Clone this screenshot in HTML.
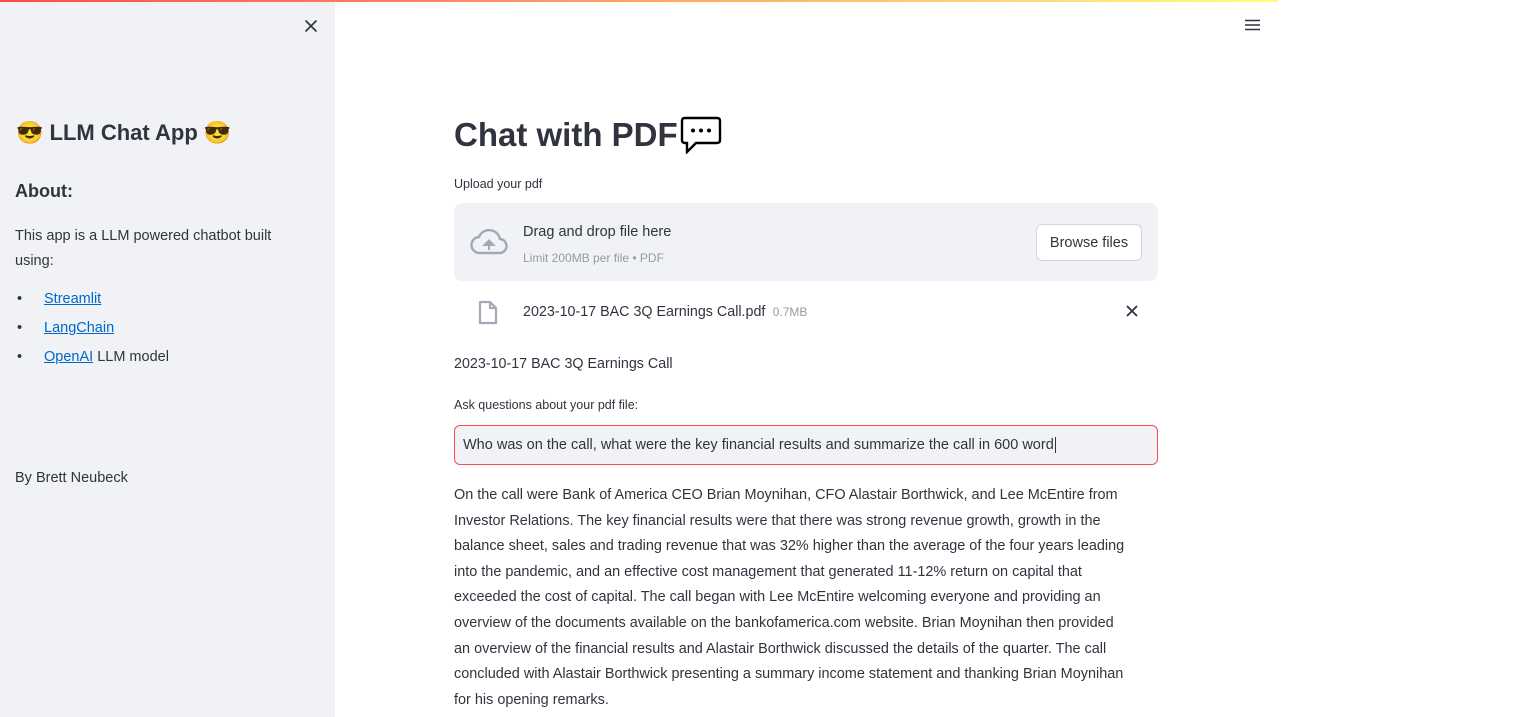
<!DOCTYPE html>
<html><head><meta charset="utf-8"><style>
*{margin:0;padding:0;box-sizing:border-box}
body{width:1536px;height:717px;overflow:hidden;background:#fff;font-family:"Liberation Sans",sans-serif;color:#31333f;position:relative}
.a{position:absolute;white-space:nowrap}
#bar{position:absolute;left:0;top:0;width:1278px;height:2px;background:linear-gradient(90deg,#ff4b4b,#fffd80)}
#side{position:absolute;left:0;top:2px;width:335px;height:715px;background:#f0f2f6}
a{color:#0068c9}
.p{font-size:14.5px}
.body{font-size:14.45px;line-height:25.6px}
</style></head><body>
<div id="bar"></div>
<div id="side"></div>
<svg class="a" style="left:304px;top:19px" width="14" height="14" viewBox="0 0 14 14"><path d="M1.5 1.5L12.5 12.5M12.5 1.5L1.5 12.5" stroke="#31333f" stroke-width="1.6"/></svg>
<div class="a" style="left:16px;top:118px;font-size:22px;font-weight:bold;line-height:30px">😎 LLM Chat App 😎</div>
<div class="a" style="left:15px;top:181px;font-size:18px;font-weight:bold">About:</div>
<div class="a p" style="left:15px;top:224px;line-height:25px">This app is a LLM powered chatbot built<br>using:</div>
<div class="a p" style="left:17px;top:291px">•</div><div class="a p" style="left:44px;top:291px"><a href="#">Streamlit</a></div>
<div class="a p" style="left:17px;top:320px">•</div><div class="a p" style="left:44px;top:320px"><a href="#">LangChain</a></div>
<div class="a p" style="left:17px;top:349px">•</div><div class="a p" style="left:44px;top:349px"><a href="#">OpenAI</a> LLM model</div>
<div class="a p" style="left:15px;top:470px">By Brett Neubeck</div>
<svg class="a" style="left:1244px;top:19px" width="17" height="12" viewBox="0 0 17 12"><path d="M1 1.5H16M1 6H16M1 10.5H16" stroke="#31333f" stroke-width="1.6"/></svg>
<div class="a" style="left:454px;top:114px;font-size:33px;font-weight:bold;line-height:42px">Chat with PDF</div>
<svg class="a" style="left:680px;top:116px" width="42" height="38" viewBox="0 0 42 38"><path d="M5 2H37Q40 2 40 5V24Q40 27 37 27H16L7 36V27H5Q2 27 2 24V5Q2 2 5 2Z" fill="#fff" stroke="#000" stroke-width="2.4"/><circle cx="13" cy="14.5" r="2" fill="#000"/><circle cx="21" cy="14.5" r="2" fill="#000"/><circle cx="29" cy="14.5" r="2" fill="#000"/></svg>
<div class="a" style="left:454px;top:177px;font-size:12.5px">Upload your pdf</div>
<div class="a" style="left:454px;top:203px;width:704px;height:78px;background:#f0f2f6;border-radius:8px"></div>
<svg class="a" style="left:470px;top:228px" width="38" height="28" viewBox="0 0 38 28"><path d="M10 25H29A7 7 0 0 0 30 11A11 11 0 0 0 9 9A8 8 0 0 0 10 25Z" fill="none" stroke="#a3a8b8" stroke-width="2.4"/><path d="M19 22V13M14.5 17L19 12.5L23.5 17Z" fill="#a3a8b8" stroke="#a3a8b8" stroke-width="2"/></svg>
<div class="a" style="left:523px;top:224px;font-size:14.5px">Drag and drop file here</div>
<div class="a" style="left:523px;top:251px;font-size:12px;color:#979aa4">Limit 200MB per file • PDF</div>
<div class="a" style="left:1036px;top:224px;width:106px;height:37px;background:#fff;border:1px solid #d6d6d9;border-radius:6px;font-size:14.5px;text-align:center;line-height:36px">Browse files</div>
<svg class="a" style="left:478px;top:300px" width="20" height="25" viewBox="0 0 20 25"><path d="M2 2H12L18 8V23H2Z M12 2V8H18" fill="none" stroke="#a3a8b8" stroke-width="2.2" stroke-linejoin="round"/></svg>
<div class="a" style="left:523px;top:304px;font-size:14.3px">2023-10-17 BAC 3Q Earnings Call.pdf <span style="font-size:12px;color:#979aa4">&nbsp;0.7MB</span></div>
<svg class="a" style="left:1126px;top:305px" width="12" height="12" viewBox="0 0 12 12"><path d="M1 1L11 11M11 1L1 11" stroke="#31333f" stroke-width="1.8"/></svg>
<div class="a" style="left:454px;top:356px;font-size:14.3px">2023-10-17 BAC 3Q Earnings Call</div>
<div class="a" style="left:454px;top:398px;font-size:12.5px">Ask questions about your pdf file:</div>
<div class="a" style="left:454px;top:425px;width:704px;height:40px;background:#f0f2f6;border:1px solid #ff4b4b;border-radius:6px"></div>
<div class="a" style="left:463px;top:437px;font-size:14.5px">Who was on the call, what were the key financial results and summarize the call in 600 word<span style="border-left:1px solid #31333f;margin-left:1px"></span></div>
<div class="a body" style="left:454px;top:483px">On the call were Bank of America CEO Brian Moynihan, CFO Alastair Borthwick, and Lee McEntire from<br>Investor Relations. The key financial results were that there was strong revenue growth, growth in the<br>balance sheet, sales and trading revenue that was 32% higher than the average of the four years leading<br>into the pandemic, and an effective cost management that generated 11-12% return on capital that<br>exceeded the cost of capital. The call began with Lee McEntire welcoming everyone and providing an<br>overview of the documents available on the bankofamerica.com website. Brian Moynihan then provided<br>an overview of the financial results and Alastair Borthwick discussed the details of the quarter. The call<br>concluded with Alastair Borthwick presenting a summary income statement and thanking Brian Moynihan<br>for his opening remarks.</div>
</body></html>
